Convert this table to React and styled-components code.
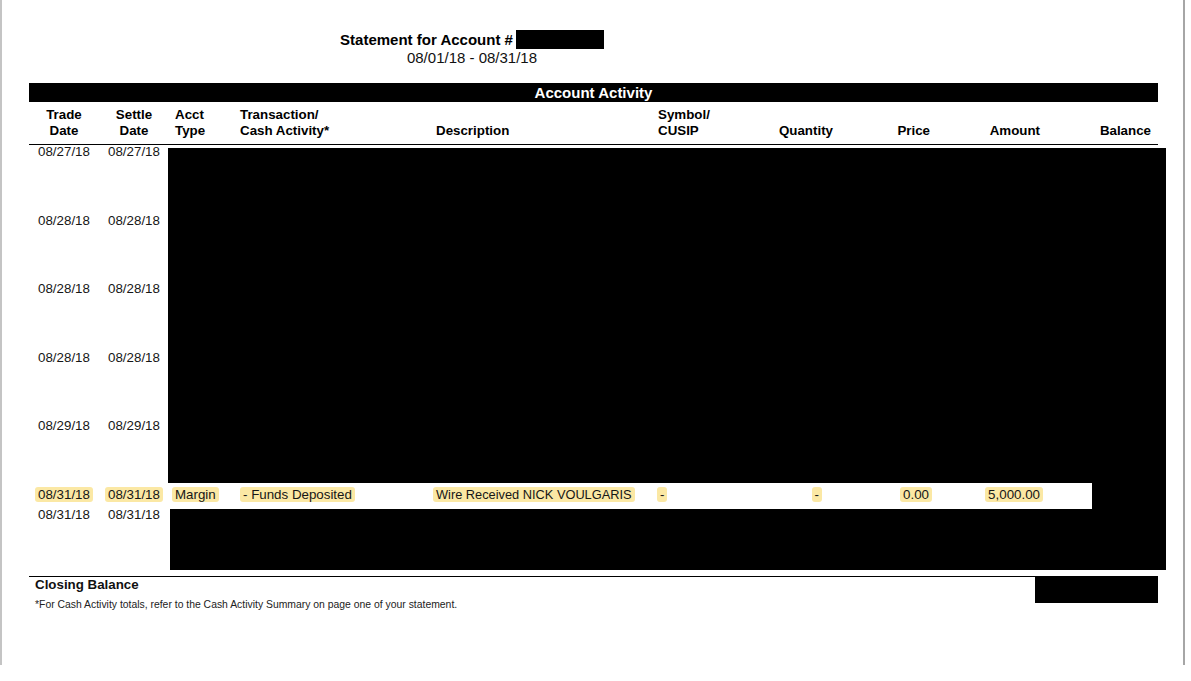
import React from "react";
import styled, { createGlobalStyle } from "styled-components";

const GlobalStyle = createGlobalStyle`
	html, body {
		margin: 0;
		padding: 0;
		background: #fff;
	}
	body {
		font-family: "Liberation Sans", Arial, sans-serif;
		color: #000;
	}
`;

// column widths, left edges at 29, 99, 169, 236, 432, 654, 740, 837, 934, 1044
const COLUMNS = "70px 70px 67px 196px 222px 86px 97px 97px 110px 114px";

const Page = styled.div`
	box-sizing: border-box;
	width: 1185px;
	height: 665px;
	padding-top: 30px;
	border-left: 2px solid #c4c4c4;
	border-right: 2px solid #a6a6a6;
	background: #fff;
`;

const TitleBlock = styled.div`
	width: 400px;
	margin-left: 270px;
	display: flex;
	flex-direction: column;
	align-items: center;
`;

const TitleLine = styled.div`
	display: flex;
	align-items: center;
	gap: 3px;
	height: 19px;
	font-size: 15px;
	font-weight: 700;
`;

const AccountMask = styled.span`
	display: block;
	width: 88px;
	height: 19px;
	background: #000;
`;

const Period = styled.div`
	font-size: 15px;
	line-height: 18px;
	color: #111;
`;

const Table = styled.div`
	width: 1129px;
	margin: 16px 0 0 27px;
`;

const Banner = styled.div`
	height: 19px;
	background: #000;
	color: #fff;
	font-size: 15px;
	font-weight: 700;
	line-height: 19px;
	text-align: center;
`;

const HeadRow = styled.div`
	display: grid;
	grid-template-columns: ${COLUMNS};
	align-items: end;
	padding: 5px 0;
	border-bottom: 1px solid #000;
	font-size: 13.33px;
	font-weight: 700;
	line-height: 16px;
`;

const Head = styled.div`
	text-align: ${(p) => p.$align || "left"};
	padding: 0 ${(p) => p.$pr || 0}px 0 ${(p) => p.$pl || 0}px;
`;

const Body = styled.div`
	display: grid;
	grid-template-columns: ${COLUMNS};
	grid-template-rows: repeat(5, 68.5px) 20.5px 63px;
	font-size: 13.33px;
	line-height: 13px;
	color: #161616;
`;

const Cell = styled.div`
	grid-row: ${(p) => p.$row};
	grid-column: ${(p) => p.$col};
	text-align: ${(p) => p.$align || "left"};
	padding: 0 ${(p) => p.$pr || 0}px 0 ${(p) => p.$pl || 0}px;
	font-size: ${(p) => p.$size || "inherit"};
	white-space: nowrap;
`;

const Redaction = styled.div`
	grid-row: ${(p) => p.$rows};
	grid-column: ${(p) => p.$cols};
	margin: ${(p) => p.$m};
	background: #000;
`;

const Mark = styled.span`
	background: #fbe8a4;
	border-radius: 3px;
	padding: 0 3px;
	margin: 0 -3px;
`;

const Closing = styled.div`
	display: grid;
	grid-template-columns: 1fr 123px;
	margin-top: 5px;
	border-top: 1px solid #000;
`;

const ClosingLabel = styled.div`
	grid-column: 1;
	grid-row: 1;
	padding-left: 6px;
	margin-bottom: 6px;
	font-size: 13.33px;
	font-weight: 700;
	line-height: 16px;
	color: #111;
`;

const Footnote = styled.div`
	grid-column: 1;
	grid-row: 2;
	padding-left: 6px;
	font-size: 10.4px;
	line-height: 12px;
	color: #222;
`;

const BalanceMask = styled.div`
	grid-column: 2;
	grid-row: 1 / span 2;
	align-self: start;
	height: 26px;
	background: #000;
`;

const headers = [
	{ label: ["Trade", "Date"], align: "center" },
	{ label: ["Settle", "Date"], align: "center" },
	{ label: ["Acct", "Type"], pl: 6 },
	{ label: ["Transaction/", "Cash Activity*"], pl: 4 },
	{ label: ["Description"], pl: 4 },
	{ label: ["Symbol/", "CUSIP"], pl: 4 },
	{ label: ["Quantity"], align: "right", pr: 4 },
	{ label: ["Price"], align: "right", pr: 4 },
	{ label: ["Amount"], align: "right", pr: 4 },
	{ label: ["Balance"], align: "right", pr: 7 },
];

const dates = [
	["08/27/18", "08/27/18"],
	["08/28/18", "08/28/18"],
	["08/28/18", "08/28/18"],
	["08/28/18", "08/28/18"],
	["08/29/18", "08/29/18"],
	["08/31/18", "08/31/18"],
	["08/31/18", "08/31/18"],
];

const HIGHLIGHT_ROW = 6;

const deposit = [
	{ col: 3, text: "Margin", pl: 6 },
	{ col: 4, text: "- Funds Deposited", pl: 7 },
	{ col: 5, text: "Wire Received NICK VOULGARIS", pl: 4, size: "12.8px" },
	{ col: 6, text: "-", pl: 6 },
	{ col: 7, text: "-", align: "right", pr: 18 },
	{ col: 8, text: "0.00", align: "right", pr: 5 },
	{ col: 9, text: "5,000.00", align: "right", pr: 4 },
];

function App() {
	return (
		<>
			<GlobalStyle />
			<Page>
				<TitleBlock>
					<TitleLine>
						<span>Statement for Account #</span>
						<AccountMask />
					</TitleLine>
					<Period>08/01/18 - 08/31/18</Period>
				</TitleBlock>

				<Table>
					<Banner>Account Activity</Banner>
					<HeadRow>
						{headers.map((h, i) => (
							<Head key={i} $align={h.align} $pl={h.pl} $pr={h.pr}>
								{h.label.map((line, j) => (
									<React.Fragment key={j}>
										{j > 0 && <br />}
										{line}
									</React.Fragment>
								))}
							</Head>
						))}
					</HeadRow>

					<Body>
						{dates.map(([trade, settle], i) => {
							const row = i + 1;
							const lit = row === HIGHLIGHT_ROW;
							return (
								<React.Fragment key={row}>
									<Cell $row={row} $col={1} $align="center">
										{lit ? <Mark>{trade}</Mark> : trade}
									</Cell>
									<Cell $row={row} $col={2} $align="center">
										{lit ? <Mark>{settle}</Mark> : settle}
									</Cell>
								</React.Fragment>
							);
						})}

						{deposit.map((d) => (
							<Cell
								key={d.col}
								$row={HIGHLIGHT_ROW}
								$col={d.col}
								$align={d.align}
								$pl={d.pl}
								$pr={d.pr}
								$size={d.size}
							>
								<Mark>{d.text}</Mark>
							</Cell>
						))}

						<Redaction $rows="1 / span 5" $cols="3 / span 8" $m="3px -8px 5px -1px" />
						<Redaction $rows="6" $cols="10" $m="-5px -8px -1px 48px" />
						<Redaction $rows="7" $cols="3 / span 8" $m="1px -8px 1px 1px" />
					</Body>

					<Closing>
						<ClosingLabel>Closing Balance</ClosingLabel>
						<Footnote>
							*For Cash Activity totals, refer to the Cash Activity Summary on page one of your
							statement.
						</Footnote>
						<BalanceMask />
					</Closing>
				</Table>
			</Page>
		</>
	);
}

export default App;
